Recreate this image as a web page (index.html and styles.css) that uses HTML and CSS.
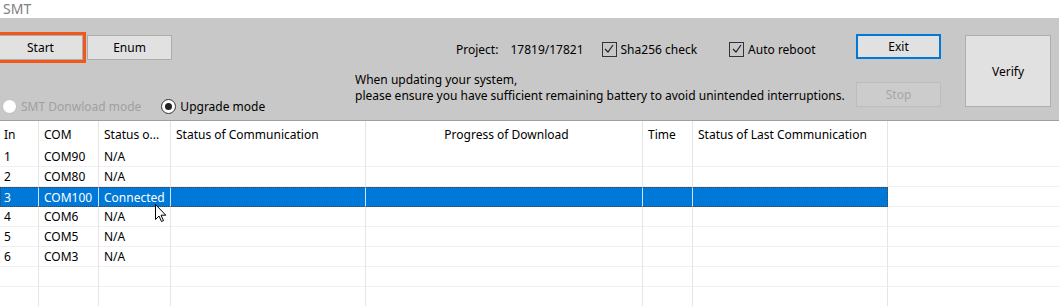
FILE: index.html
```html
<!DOCTYPE html>
<html lang="en">
<head>
  <meta charset="UTF-8" />
  <title>SMT</title>
  <link rel="stylesheet" href="styles.css">
</head>
<body>
  <div class="titlebar">SMT</div>

  <div class="panel">
    <div class="left">
      <div class="btn-row">
        <button class="btn start">Start</button>
        <button class="btn">Enum</button>
      </div>
      <div class="modes">
        <label class="radio disabled"><span class="dot"></span>SMT Donwload mode</label>
        <label class="radio checked"><span class="dot"></span>Upgrade mode</label>
      </div>
    </div>

    <div class="mid">
      <div class="opts">
        <span class="project">Project:</span>
        <span class="proj-num">17819/17821</span>
        <label class="check sha">
          <span class="box"><svg width="12" height="12" viewBox="0 0 12 12"><polyline points="2,6 5,9 10,2" fill="none" stroke="#222" stroke-width="1.2"/></svg></span>
          Sha256 check
        </label>
        <label class="check reboot">
          <span class="box"><svg width="12" height="12" viewBox="0 0 12 12"><polyline points="2,6 5,9 10,2" fill="none" stroke="#222" stroke-width="1.2"/></svg></span>
          Auto reboot
        </label>
      </div>
      <p class="notice">When updating your system,<br>please ensure you have sufficient remaining battery to avoid unintended interruptions.</p>
    </div>

    <div class="actions">
      <button class="btn exit">Exit</button>
      <button class="btn" disabled>Stop</button>
    </div>

    <button class="btn verify">Verify</button>
  </div>

  <div class="grid">
    <table>
      <colgroup>
        <col style="width:39px"><col style="width:60px"><col style="width:72px"><col style="width:195px">
        <col style="width:277px"><col style="width:50px"><col style="width:195px"><col>
      </colgroup>
      <thead>
        <tr>
          <th class="first">In</th><th>COM</th><th>Status o...</th><th>Status of Communication</th>
          <th class="center">Progress of Download</th><th>Time</th><th>Status of Last Communication</th><th class="fill"></th>
        </tr>
      </thead>
      <tbody>
        <tr><td class="first">1</td><td>COM90</td><td>N/A</td><td></td><td></td><td></td><td></td><td class="fill"></td></tr>
        <tr><td class="first">2</td><td>COM80</td><td>N/A</td><td></td><td></td><td></td><td></td><td class="fill"></td></tr>
        <tr class="sel"><td class="first">3</td><td>COM100</td><td>Connected</td><td></td><td></td><td></td><td class="last"></td><td class="fill"></td></tr>
        <tr><td class="first">4</td><td>COM6</td><td>N/A</td><td></td><td></td><td></td><td></td><td class="fill"></td></tr>
        <tr><td class="first">5</td><td>COM5</td><td>N/A</td><td></td><td></td><td></td><td></td><td class="fill"></td></tr>
        <tr><td class="first">6</td><td>COM3</td><td>N/A</td><td></td><td></td><td></td><td></td><td class="fill"></td></tr>
        <tr><td class="first"></td><td></td><td></td><td></td><td></td><td></td><td></td><td class="fill"></td></tr>
        <tr><td class="first"></td><td></td><td></td><td></td><td></td><td></td><td></td><td class="fill"></td></tr>
      </tbody>
    </table>

    <svg class="cursor" width="12" height="19" viewBox="0 0 12 19">
      <path d="M0.5,0.5 L0.5,15.5 L4,12 L6.5,17.5 L8.5,16.6 L6,11.2 L10.8,11.2 Z" fill="#fff" stroke="#000" stroke-width="1"/>
    </svg>
  </div>
</body>
</html>
```

FILE: styles.css
```css
* {
  box-sizing: border-box;
}

body {
  margin: 0;
  font-family: "Segoe UI", "Noto Sans", sans-serif;
  font-size: 12px;
  color: #000;
  background: #fff;
  overflow: hidden;
}

.titlebar {
  height: 18px;
  padding-left: 3px;
  font-size: 14px;
  line-height: 17px;
  color: #808080;
}

/* top control panel */
.panel {
  display: flex;
  height: 103px;
  background: #c8c8c8;
  border-bottom: 1px solid #a0a0a0;
}

.btn {
  height: 25px;
  padding: 0;
  font-family: inherit;
  font-size: 12px;
  color: #000;
  background: #e1e1e1;
  border: 1px solid #adadad;
}

.btn:disabled {
  color: #a6a6a6;
  background: #cccccc;
  border-color: #bdbdbd;
}

.left {
  width: 355px;
  padding-top: 17px;
}

.btn-row {
  display: flex;
  gap: 4px;
  margin-left: -2px;
}

.btn-row .btn {
  width: 85px;
}

.start {
  outline: 3px solid #f2581c;
}

.modes {
  display: flex;
  align-items: center;
  gap: 20px;
  margin-top: 38px;
  margin-left: 2px;
  height: 16px;
}

.radio {
  display: flex;
  align-items: center;
  gap: 4px;
}

.radio .dot {
  width: 15px;
  height: 15px;
  border-radius: 50%;
  border: 1px solid #333;
  background: #fff;
  position: relative;
}

.radio.disabled {
  color: #a0a0a0;
}

.radio.disabled .dot {
  border-color: #bcbcbc;
  background: #fff;
}

.radio.checked .dot::after {
  content: "";
  position: absolute;
  left: 3px;
  top: 3px;
  width: 7px;
  height: 7px;
  border-radius: 50%;
  background: #222;
}

.mid {
  width: 501px;
  padding-top: 23px;
}

.opts {
  display: flex;
  align-items: center;
  height: 16px;
  padding-left: 101px;
}

.proj-num {
  margin-left: 12px;
}

.check {
  display: flex;
  align-items: center;
  gap: 4px;
}

.check.sha {
  margin-left: 18px;
}

.check.reboot {
  margin-left: 32px;
}

.box {
  display: flex;
  align-items: center;
  justify-content: center;
  width: 15px;
  height: 15px;
  border: 1px solid #333;
}

.notice {
  margin: 15px 0 0;
  line-height: 16px;
}

.actions {
  display: flex;
  flex-direction: column;
  gap: 23px;
  width: 85px;
  padding-top: 16px;
}

.actions .btn {
  width: 85px;
}

.exit {
  border: 2px solid #0078d7;
}

.verify {
  width: 86px;
  height: 72px;
  margin: 17px 0 0 24px;
}

/* device list */
.grid {
  position: relative;
}

table {
  width: 100%;
  table-layout: fixed;
  border-collapse: separate;
  border-spacing: 0;
}

th, td {
  padding: 0 0 0 5px;
  text-align: left;
  font-weight: normal;
  white-space: nowrap;
  overflow: hidden;
  border-right: 1px solid #e5e5e5;
}

th {
  height: 26px;
}

th.center {
  text-align: center;
}

td {
  height: 20px;
  border-bottom: 1px solid #f0f0f0;
}

th.first, td.first {
  padding-left: 4px;
}

th.fill, td.fill {
  border-right: none;
}

tr.sel td {
  height: 20px;
  color: #fff;
  background: #0078d7;
  border-top: 1px dotted #444;
  border-bottom: 1px dotted #444;
  border-right-color: #cfe4f7;
}

tr.sel td.first {
  border-left: 1px dotted #444;
  padding-left: 3px;
}

tr.sel td.last {
  border-right: 1px dotted #444;
}

tr.sel td.fill {
  background: #fff;
  border-top: none;
  border-bottom: 1px solid #f0f0f0;
}

.cursor {
  position: absolute;
  left: 155px;
  top: 83px;
}
```
